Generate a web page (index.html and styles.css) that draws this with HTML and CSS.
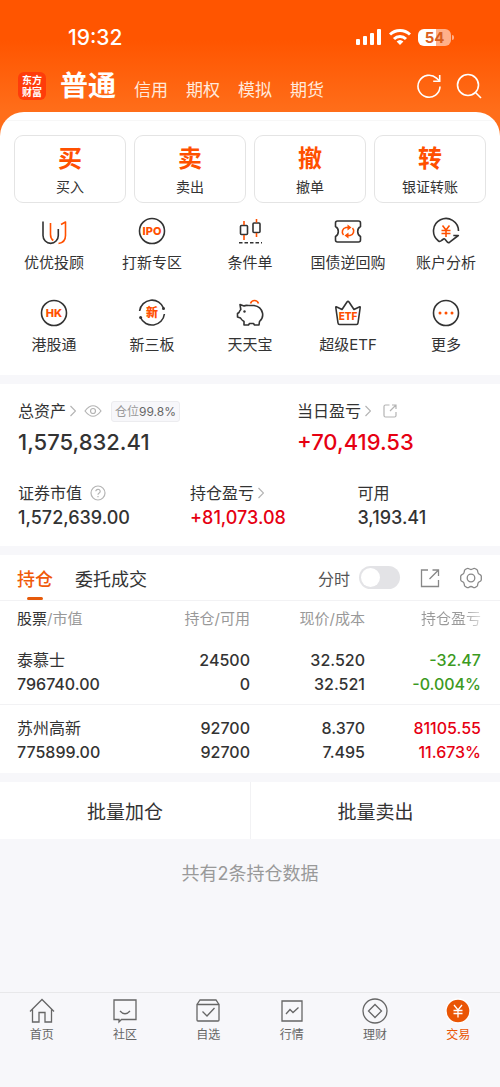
FILE: index.html
```html
<!DOCTYPE html>
<html lang="zh-CN">
<head>
  <meta charset="utf-8">
  <meta name="viewport" content="width=device-width, initial-scale=1">
  <title>交易</title>
  <link rel="stylesheet" href="styles.css">
</head>
<body>

  <div class="top">
    <div class="status-bar">
      <span class="time">19:32</span>
      <div class="status-icons">
        <svg width="26" height="16" viewBox="0 0 26 16" fill="#fff">
          <rect x="0" y="10" width="4" height="6" rx="1"/>
          <rect x="7" y="7" width="4" height="9" rx="1"/>
          <rect x="14" y="4" width="4" height="12" rx="1"/>
          <rect x="21" y="0" width="4" height="16" rx="1"/>
        </svg>
        <svg width="22" height="16" viewBox="0 0 22 16" fill="none" stroke="#fff" stroke-width="3">
          <path d="M1 5.500a14.500 14.500 0 0 1 20 0"/>
          <path d="M5 10a8.500 8.500 0 0 1 12 0"/>
          <path d="M11 16l-3.400-3.500a5 5 0 0 1 6.800 0z" fill="#fff" stroke="none"/>
        </svg>
        <div class="battery"><span>54</span></div>
      </div>
    </div>

    <header class="header">
      <div class="logo"><span>东方</span><span>财富</span></div>
      <nav class="account-tabs">
        <a href="#" class="active">普通</a>
        <a href="#">信用</a>
        <a href="#">期权</a>
        <a href="#">模拟</a>
        <a href="#">期货</a>
      </nav>
      <button class="icon-button" aria-label="刷新">
        <svg width="26" height="26" viewBox="0 0 26 26" fill="none" stroke="#fff" stroke-width="1.600">
          <path d="M24 13.500A11 11 0 1 1 20.500 5.200L23.500 8"/>
          <path d="M23.700 2v6.300h-6.500"/>
        </svg>
      </button>
      <button class="icon-button" aria-label="搜索">
        <svg width="26" height="26" viewBox="0 0 26 26" fill="none" stroke="#fff" stroke-width="1.600">
          <circle cx="12" cy="12" r="10.500"/>
          <path d="M19.500 19.500L25 25"/>
        </svg>
      </button>
    </header>

    <div class="sheet">
      <div class="quick">
        <button><b>买</b>买入</button>
        <button><b>卖</b>卖出</button>
        <button><b>撤</b>撤单</button>
        <button><b>转</b>银证转账</button>
      </div>

      <div class="services">
        <a href="#">
          <svg viewBox="0 0 28 28">
            <path d="M3 4.500V18.500a7.600 7.800 0 0 0 15.300 0V12"/>
            <path class="o" d="M10.500 6V17.500q0 4 2.800 6M21 7.500l4.500-2.500V18.500q0 7-7 8"/>
          </svg>
          优优投顾
        </a>
        <a href="#">
          <svg viewBox="0 0 28 28">
            <circle cx="14" cy="14" r="12.500"/>
            <text x="14" y="18" font-size="11">IPO</text>
          </svg>
          打新专区
        </a>
        <a href="#">
          <svg viewBox="0 0 28 28">
            <rect x="4.500" y="8.500" width="7" height="9" rx="1"/>
            <rect x="17" y="6" width="7" height="9.500" rx="1"/>
            <path class="o" d="M8 4v4M8 18v5M20.500 2v3.500M20.500 16v4"/>
            <path d="M3 25.700h23" stroke-dasharray="3.500 2"/>
          </svg>
          条件单
        </a>
        <a href="#">
          <svg viewBox="0 0 28 28">
            <path d="M3.500 4h21q2 0 2 2v3.500q-2.800 1.500-2.800 5t2.800 5V23q0 2-2 2h-21q-2 0-2-2v-3.500q2.800-1.500 2.800-5t-2.800-5V6q0-2 2-2z"/>
            <path class="o" d="M9.500 18A4.500 4.500 0 0 1 12 10.500h2M18.500 11A4.500 4.500 0 0 1 16 18.500h-2"/>
            <path class="arrow" d="M13.500 7.500l4 3-4 3zM14.500 15.500l-4 3 4 3z"/>
          </svg>
          国债逆回购
        </a>
        <a href="#">
          <svg viewBox="0 0 28 28">
            <path d="M26.500 14A12.500 12.500 0 1 0 6.500 24q1.500 1 3-.5l2-1.500q.8-.6 1.500.2l2.500 3q.8.800 2.200 0l8.600-6.700h-5"/>
            <path class="o" d="M10.500 8.500l3.500 4.500 3.500-4.500M14 13v7M9.500 13.500h9M9.500 16.500h9"/>
          </svg>
          账户分析
        </a>
        <a href="#">
          <svg viewBox="0 0 28 28">
            <circle cx="14" cy="14" r="12.500"/>
            <text x="14" y="18" font-size="11">HK</text>
          </svg>
          港股通
        </a>
        <a href="#">
          <svg viewBox="0 0 28 28">
            <path d="M1.600 12A12.500 12.500 0 0 1 25.800 9.500M26.400 15A12.500 12.500 0 0 1 2.500 18.500"/>
            <circle class="dot" cx="25.500" cy="9.500" r="1.500"/>
            <circle class="dot" cx="2.600" cy="18.500" r="1.500"/>
            <text x="14" y="18" font-size="12">新</text>
          </svg>
          新三板
        </a>
        <a href="#">
          <svg viewBox="0 0 28 28">
            <path d="M12.500 6.500q-3-.5-4.500.5L4 5.500l.8 5Q3.500 12 3 13.500L1.500 14.500v3.500l3 1q1 2 3.500 3.500v3.500h4.500l1-1.500h4l1 1.500h4.500l.5-3.500q4-3.500 3-8.500-1.500-6.500-8.500-7.500h-5.500"/>
            <circle class="dot" cx="8.500" cy="12.500" r="1.200"/>
            <path class="o" d="M14.500 4.500q1-3 4-3t4 3"/>
          </svg>
          天天宝
        </a>
        <a href="#">
          <svg viewBox="0 0 28 28">
            <path d="M1.800 8.500q0-1.200 1-.5L8 10.500 13 3q1-1.200 2 0l5 7.500 5.200-2.500q1-.7 1 .5L24 24q-.2 1.500-1.500 1.500h-17Q4.200 25.500 4 24z"/>
            <text x="14" y="21" font-size="10">ETF</text>
          </svg>
          超级ETF
        </a>
        <a href="#">
          <svg viewBox="0 0 28 28">
            <circle cx="14" cy="14" r="12.500"/>
            <g class="dots"><circle cx="8" cy="14" r="1.500"/><circle cx="14" cy="14" r="1.500"/><circle cx="20" cy="14" r="1.500"/></g>
          </svg>
          更多
        </a>
      </div>
    </div>
  </div>

  <main>
    <section class="assets">
      <div class="assets-row total">
        <div>
          <div class="label">
            总资产
            <svg class="chevron" width="6" height="12" viewBox="0 0 6 12"><path d="M.5 1l5 5-5 5"/></svg>
            <svg class="eye" width="18" height="12" viewBox="0 0 18 12"><path d="M1 6q8-10.500 16 0-8 10.500-16 0z"/><circle cx="9" cy="6" r="2.500"/></svg>
            <span class="tag">仓位<b>99.8%</b></span>
          </div>
          <div class="value">1,575,832.41</div>
        </div>
        <div>
          <div class="label">
            当日盈亏
            <svg class="chevron" width="6" height="12" viewBox="0 0 6 12"><path d="M.5 1l5 5-5 5"/></svg>
            <svg class="share" width="14" height="14" viewBox="0 0 14 14"><path d="M6.500 1H2.500Q1 1 1 2.500v9Q1 13 2.500 13h9q1.500 0 1.500-1.500V8M9 1h4v4M13 1L7 7"/></svg>
          </div>
          <div class="value up">+70,419.53</div>
        </div>
      </div>
      <div class="assets-row detail">
        <div>
          <div class="label">
            证券市值
            <svg class="help" width="16" height="16" viewBox="0 0 16 16"><circle cx="8" cy="8" r="7"/><path d="M5.800 6.300a2.200 2 0 1 1 3.400 1.700Q8 8.700 8 9.800M8 11v1.300"/></svg>
          </div>
          <div class="value">1,572,639.00</div>
        </div>
        <div>
          <div class="label">
            持仓盈亏
            <svg class="chevron" width="6" height="12" viewBox="0 0 6 12"><path d="M.5 1l5 5-5 5"/></svg>
          </div>
          <div class="value up">+81,073.08</div>
        </div>
        <div>
          <div class="label">可用</div>
          <div class="value">3,193.41</div>
        </div>
      </div>
    </section>

    <section class="positions">
      <div class="toolbar">
        <button class="tab active">持仓</button>
        <button class="tab">委托成交</button>
        <label class="switch">分时 <input type="checkbox" role="switch"></label>
        <button class="icon-button" aria-label="分享">
          <svg width="20" height="20" viewBox="0 0 20 20"><path d="M8 2H1.500v16.500h17V12M12.500 2h6v6M18.500 2L9.500 11"/></svg>
        </button>
        <button class="icon-button" aria-label="设置">
          <svg width="22" height="22" viewBox="0 0 22 22"><path d="M6.500 1.800q1.300-1 2.500 0 2 1.400 4 0 1.200-1 2.500 0l1.500 1q.8.700.7 2 .2 2.200 2.300 2.800 1 .4 1.300 1.600v3.600q-.3 1.200-1.300 1.600-2.100.6-2.300 2.800.1 1.300-.7 2l-1.500 1q-1.300 1-2.500 0-2-1.400-4 0-1.200 1-2.500 0l-1.500-1q-.8-.7-.7-2-.2-2.200-2.300-2.800-1-.4-1.300-1.600V9.200q.3-1.200 1.300-1.600 2.100-.6 2.300-2.800-.1-1.300.7-2z"/><circle cx="11" cy="11" r="3.800"/></svg>
        </button>
      </div>

      <table>
        <thead>
          <tr>
            <th><b>股票</b>/市值</th>
            <th>持仓/可用</th>
            <th>现价/成本</th>
            <th><span class="fade">持仓盈亏</span></th>
          </tr>
        </thead>
        <tbody>
          <tr>
            <td><span class="name">泰慕士</span><br>796740.00</td>
            <td>24500<br>0</td>
            <td>32.520<br>32.521</td>
            <td class="down">-32.47<br>-0.004%</td>
          </tr>
          <tr>
            <td><span class="name">苏州高新</span><br>775899.00</td>
            <td>92700<br>92700</td>
            <td>8.370<br>7.495</td>
            <td class="up">81105.55<br>11.673%</td>
          </tr>
        </tbody>
      </table>
    </section>

    <div class="batch">
      <button>批量加仓</button>
      <button>批量卖出</button>
    </div>

    <p class="count">共有2条持仓数据</p>
  </main>

  <nav class="tab-bar">
    <a href="#">
      <svg viewBox="0 0 26 26"><path d="M1 13.500L13 1.500l12 12M3.500 11.500V24h6.500v-9.500h6V24h6.500V11.500"/></svg>
      首页
    </a>
    <a href="#">
      <svg viewBox="0 0 26 26"><path d="M2 2h22v19.500H9.500L7 24v-2.500H2zM8 13q5 5.500 10 0"/></svg>
      社区
    </a>
    <a href="#">
      <svg viewBox="0 0 26 26"><path d="M2 6.500h22v15.500q0 1-1 1H3q-1 0-1-1zL5 2h16l3 4.500M7.500 13.500l4.500 4.500 7.500-8"/></svg>
      自选
    </a>
    <a href="#">
      <svg viewBox="0 0 26 26"><path d="M3 3h20v20H3zM7 16l4-4.500 3 3L19.500 9.500"/></svg>
      行情
    </a>
    <a href="#">
      <svg viewBox="0 0 26 26"><circle cx="13" cy="13" r="12"/><path d="M13 6.500l6.500 6.500-6.500 6.500L6.500 13z"/></svg>
      理财
    </a>
    <a href="#" class="active">
      <svg viewBox="0 0 26 26"><circle cx="13" cy="13" r="12"/><path d="M9 7l4 5 4-5M13 12v7.500M8.500 12.500h9M8.500 15.500h9"/></svg>
      交易
    </a>
  </nav>

</body>
</html>
```
FILE: styles.css
```css
* {
  box-sizing: border-box;
}

body {
  margin: 0;
  min-height: 100vh;
  display: flex;
  flex-direction: column;
  background: #f7f7fa;
  color: #333;
  font-family: Inter, "Noto Sans CJK SC", sans-serif;
  font-size: 16px;
}

button {
  margin: 0;
  padding: 0;
  border: none;
  background: none;
  color: inherit;
  font: inherit;
}

a {
  color: inherit;
  text-decoration: none;
}

svg {
  display: block;
  flex: none;
}

.up {
  color: #e60012;
}

.down {
  color: #3c9a1e;
}

/* Orange header */
.top {
  padding-top: 22px;
  background: #ff5a06 linear-gradient(#ff5500 40px, #ff6e1a 112px) no-repeat;
}

.status-bar {
  display: flex;
  align-items: center;
  justify-content: space-between;
  height: 30px;
  padding: 0 49px 0 68px;
  color: #fff;
}

.time {
  font-size: 21px;
  font-weight: 500;
}

.status-icons {
  display: flex;
  align-items: center;
  gap: 7px;
}

.battery {
  position: relative;
  width: 33px;
  height: 17px;
  border-radius: 6px;
  background: linear-gradient(90deg, #fff 54%, #ffb08a 54%);
  color: #d95f1e;
  font-size: 15px;
  font-weight: 700;
  line-height: 17px;
  text-align: center;
}

.battery::after {
  content: "";
  position: absolute;
  top: 6px;
  right: -3px;
  width: 2px;
  height: 5px;
  border-radius: 0 2px 2px 0;
  background: #ffb08a;
}

.header {
  display: flex;
  align-items: center;
  height: 60px;
  padding: 8px 18px 0;
}

.logo {
  display: flex;
  flex-direction: column;
  align-items: center;
  justify-content: center;
  width: 28px;
  height: 28px;
  border-radius: 6px;
  background: #ff3c0a;
  color: #fff;
  font-size: 10px;
  font-weight: 700;
  line-height: 12px;
}

.account-tabs {
  display: flex;
  flex: 1;
  align-items: baseline;
  gap: 18px;
  margin-left: 14px;
  color: #ffe9dc;
  font-size: 17px;
}

.account-tabs .active {
  color: #fff;
  font-size: 28px;
  font-weight: 700;
  line-height: 40px;
}

.header .icon-button {
  margin-left: 14px;
}

/* White sheet */
.sheet {
  overflow: hidden;
  padding-top: 8px;
  border-radius: 24px 24px 0 0;
  background: #fff;
}

.quick {
  display: grid;
  grid-template-columns: repeat(4, 1fr);
  gap: 8px;
  padding: 14px 14px 0;
  border-top: 1px solid #f7f7f7;
}

.quick button {
  height: 68px;
  padding-top: 3px;
  border: 1px solid #e4e4e4;
  border-radius: 9px;
  font-size: 14px;
  line-height: 24px;
}

.quick b {
  display: block;
  color: #ff5000;
  font-size: 24px;
  line-height: 32px;
}

.services {
  display: grid;
  grid-template-columns: repeat(5, 1fr);
  row-gap: 25px;
  padding: 14px 5px 19px;
}

.services a {
  display: flex;
  flex-direction: column;
  align-items: center;
  gap: 7px;
  font-size: 15px;
  line-height: 22px;
  white-space: nowrap;
}

.services svg {
  width: 28px;
  height: 28px;
  fill: none;
  stroke: #333;
  stroke-width: 1.6;
  stroke-linejoin: round;
}

.services .o {
  stroke: #ff5000;
}

.services .dot {
  fill: #333;
  stroke: none;
}

.services .dots,
.services .arrow {
  fill: #ff5000;
  stroke: none;
}

.services text {
  fill: #ff5000;
  stroke: none;
  font-weight: 800;
  text-anchor: middle;
}

/* Assets */
.assets {
  margin-top: 9px;
  padding: 15px 17px 15px 18px;
  background: #fff;
}

.assets-row {
  display: grid;
}

.total {
  grid-template-columns: 3fr 2fr;
  margin-bottom: 20px;
}

.detail {
  grid-template-columns: 37fr 36fr 27fr;
}

.label {
  display: flex;
  align-items: center;
  height: 24px;
  line-height: 22px;
  white-space: nowrap;
}

.label svg {
  fill: none;
  stroke: #b4b4b4;
  stroke-width: 1.2;
}

.chevron {
  margin-left: 4px;
}

.eye,
.help {
  margin-left: 8px;
}

.share {
  margin-left: 12px;
}

.tag {
  margin-left: 9px;
  padding: 0 3px;
  border: 1px solid #ececef;
  border-radius: 3px;
  background: #f7f7fa;
  color: #999;
  font-size: 12px;
  line-height: 19px;
}

.tag b {
  color: #666;
  font-weight: 400;
}

.value {
  font-size: 18px;
  font-weight: 500;
  line-height: 26px;
}

.total .value {
  font-size: 22px;
  line-height: 38px;
}

/* Positions */
.positions {
  margin-top: 9px;
  padding-bottom: 1px;
  background: #fff;
}

.toolbar {
  display: flex;
  align-items: center;
  height: 46px;
  padding: 0 18px 0 17px;
  border-bottom: 1px solid #f2f2f4;
}

.toolbar svg {
  fill: none;
  stroke: #888;
  stroke-width: 1.3;
}

.tab {
  position: relative;
  height: 45px;
  margin-right: 22px;
  font-size: 18px;
}

.tab.active {
  color: #f05a0a;
  font-weight: 500;
}

.tab.active::after {
  content: "";
  position: absolute;
  bottom: 0;
  left: 50%;
  width: 16px;
  height: 3px;
  margin-left: -8px;
  border-radius: 2px;
  background: #e65a0a;
}

.switch {
  display: flex;
  align-items: center;
  gap: 9px;
  margin-left: auto;
  color: #555;
}

.switch input {
  appearance: none;
  width: 41px;
  height: 23px;
  margin: 0;
  padding: 2px;
  border-radius: 12px;
  background: #e3e3e6;
}

.switch input::before {
  content: "";
  display: block;
  width: 19px;
  height: 19px;
  border-radius: 50%;
  background: #fff;
}

.switch input:checked::before {
  margin-left: auto;
}

.toolbar .icon-button {
  margin-left: 20px;
}

table {
  width: 100%;
  border-collapse: collapse;
  table-layout: fixed;
}

th,
td {
  width: 25%;
  padding: 0;
  text-align: right;
}

th:first-child,
td:first-child {
  padding-left: 17px;
  text-align: left;
}

th:nth-child(3) {
  width: 23%;
}

th:last-child {
  width: 27%;
}

th:last-child,
td:last-child {
  padding-right: 19px;
}

th {
  height: 36px;
  color: #999;
  font-size: 15px;
  font-weight: 400;
  line-height: 20px;
}

th b {
  color: #333;
  font-weight: 400;
}

.fade {
  background: linear-gradient(90deg, #999 70%, #ddd);
  background-clip: text;
  color: transparent;
}

td {
  padding: 11px 0 8px;
  font-weight: 500;
  line-height: 24px;
}

tbody tr + tr {
  border-top: 1px solid #f2f2f4;
}

.name {
  font-weight: 400;
}

.batch {
  display: grid;
  grid-template-columns: 1fr 1fr;
  margin-top: 9px;
  background: #fff;
}

.batch button {
  height: 57px;
  font-size: 19px;
}

.batch button + button {
  border-left: 1px solid #f2f2f4;
}

.count {
  margin: 21px 0;
  color: #999;
  font-size: 18px;
  line-height: 28px;
  text-align: center;
}

/* Bottom tab bar */
.tab-bar {
  display: grid;
  grid-template-columns: repeat(6, 1fr);
  margin-top: auto;
  padding: 5px 0 43px;
  border-top: 1px solid #e8e8ea;
  color: #666;
  font-size: 12px;
  line-height: 18px;
}

.tab-bar a {
  display: flex;
  flex-direction: column;
  align-items: center;
  gap: 2px;
}

.tab-bar svg {
  width: 26px;
  height: 26px;
  fill: none;
  stroke: #666;
  stroke-width: 1.3;
}

.tab-bar .active {
  color: #ea5504;
}

.tab-bar .active svg {
  fill: #ea5504;
  stroke: #fff;
}

.tab-bar .active path {
  fill: none;
}
```
